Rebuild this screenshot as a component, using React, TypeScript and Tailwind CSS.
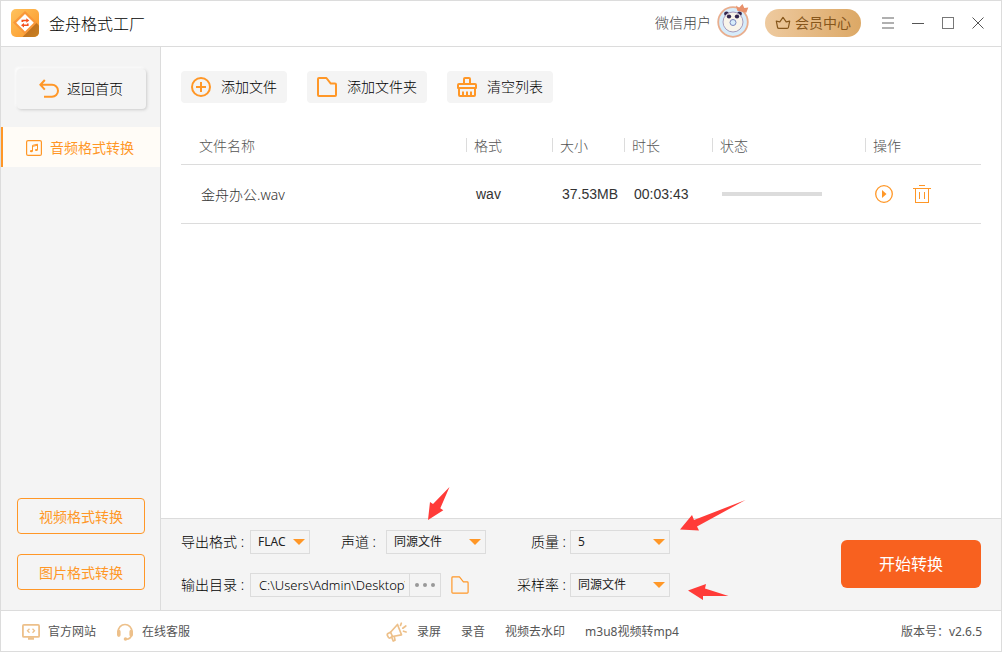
import { useState } from "react"
import type { ReactNode } from "react"

const LINE = "border-[#dcdcdc]"

function LogoIcon() {
    return (
        <svg width="28" height="28" viewBox="0 0 28 28" aria-hidden="true">
            <defs>
                <linearGradient id="logoBg" x1="0" y1="0" x2="1" y2="1">
                    <stop offset="0" stopColor="#ffc35e" />
                    <stop offset="1" stopColor="#fb9526" />
                </linearGradient>
                <linearGradient id="logoShade" x1="0" y1="0" x2="1" y2="1">
                    <stop offset="0" stopColor="#b9651a" />
                    <stop offset="1" stopColor="#c98223" />
                </linearGradient>
            </defs>
            <rect width="28" height="28" rx="5" fill="url(#logoBg)" />
            <path d="M25 13.5L28 16.5V23a5 5 0 0 1-5 5H11.5Z" fill="url(#logoShade)" />
            <path d="M14 2L26 13.5L14 25.5L2 13.5Z" fill="#f9983a" />
            <path d="M14 5L22.8 13.8L14 22.6L5.2 13.8Z" fill="#fff" />
            <path d="M10.5 13v-2.300h4.800V9.200l3 2.300-3 2.300v-1.500h-3V13ZM17.600 14.400v2.600h-4.600v1.500l-3-2.300 3-2.300v1.500h3v-1Z" fill="#f4501e" />
        </svg>
    )
}

function AvatarIcon() {
    return (
        <svg width="34" height="34" viewBox="0 0 34 34" aria-hidden="true">
            <circle cx="16" cy="18" r="14.8" fill="#d6ecfb" stroke="#e9ae8e" strokeWidth="1.8" />
            <circle cx="9.5" cy="9.8" r="2.4" fill="#32264e" />
            <circle cx="22.5" cy="9.8" r="2.4" fill="#32264e" />
            <circle cx="16" cy="18" r="10" fill="#f8f4ea" stroke="#a79bbb" strokeWidth="1" />
            <ellipse cx="12" cy="12.500" rx="2.200" ry="2" fill="#32264e" />
            <ellipse cx="20" cy="12.500" rx="2.200" ry="2" fill="#32264e" />
            <circle cx="16" cy="18.500" r="3" fill="#d6ecfb" stroke="#7b86bd" strokeWidth="1" />
            <path d="M19 1.500l3 2.200L25.500 0l1.800 4 4-.5-2 5.200-9-2Z" fill="#e8916c" />
        </svg>
    )
}

function CrownIcon() {
    return (
        <svg width="16" height="16" viewBox="0 0 16 16" fill="none" stroke="#86561b" strokeWidth="1.2" strokeLinejoin="round" aria-hidden="true">
            <path d="M3.800 13.400Q2.800 13.400 2.600 12.500L1.300 6.200L4.800 6.800L8 2.400L11.200 6.800L14.700 6.200L13.400 12.500Q13.200 13.400 12.200 13.400Z" />
        </svg>
    )
}

function BackIcon() {
    return (
        <svg width="20" height="20" viewBox="0 0 20 20" fill="none" stroke="#ff9727" strokeWidth="2" aria-hidden="true">
            <path d="M5.800 1L1.400 5.800L5.800 10.600M1.600 5.800H13a6 6 0 0 1 0 12H5" />
        </svg>
    )
}

function MusicIcon() {
    return (
        <svg width="16" height="16" viewBox="0 0 16 16" fill="none" stroke="#ff9727" strokeWidth="1.2" aria-hidden="true">
            <rect x=".6" y=".6" width="14.8" height="14.8" rx="1.5" />
            <path d="M6.500 11V5.400L11.500 4.200v5.600M6.500 6.400l5-1.200" strokeWidth="1" />
            <ellipse cx="5.400" cy="11.200" rx="1.500" ry="1.100" fill="#ff9727" stroke="none" />
            <ellipse cx="10.400" cy="10" rx="1.500" ry="1.100" fill="#ff9727" stroke="none" />
        </svg>
    )
}

function AddIcon() {
    return (
        <svg width="20" height="20" viewBox="0 0 20 20" fill="none" stroke="#ff9727" strokeWidth="2" aria-hidden="true">
            <circle cx="10" cy="10" r="9" />
            <path d="M10 5v10M5 10h10" />
        </svg>
    )
}

function FolderIcon({ size, stroke }: { size: number; stroke: number }) {
    return (
        <svg width={size} height={size} viewBox="0 0 20 20" fill="none" stroke="#ff9727" strokeWidth={stroke} strokeLinejoin="round" aria-hidden="true">
            <path d="M1 2a1 1 0 0 1 1-1h7.4l4.4 5.6H18a1 1 0 0 1 1 1V18a1 1 0 0 1-1 1H2a1 1 0 0 1-1-1Z" />
        </svg>
    )
}

function BrushIcon() {
    return (
        <svg width="20" height="20" viewBox="0 0 20 20" fill="none" stroke="#ff9727" strokeWidth="2" strokeLinejoin="round" aria-hidden="true">
            <path d="M7 7V2a1 1 0 0 1 1-1h4a1 1 0 0 1 1 1v5" />
            <path d="M1 11V8a1 1 0 0 1 1-1h16a1 1 0 0 1 1 1V11ZM2 11v7a1 1 0 0 0 1 1h14a1 1 0 0 0 1-1v-7" />
            <path d="M6 18.500v-4M10 18.500v-4M14 18.500v-4" />
        </svg>
    )
}

function PlayIcon() {
    return (
        <svg width="18" height="18" viewBox="0 0 18 18" fill="none" aria-hidden="true">
            <circle cx="9" cy="9" r="8.300" stroke="#ff9727" strokeWidth="1.300" />
            <path d="M7 5v8l4.500-4Z" fill="#ff9727" />
        </svg>
    )
}

function TrashIcon() {
    return (
        <svg width="18" height="18" viewBox="0 0 18 18" fill="none" stroke="#ff9727" shapeRendering="crispEdges" aria-hidden="true">
            <path d="M6 .5h6M0 3.500h18M2.500 3.500v14h13v-14M6.500 7v7M11.500 7v7" />
        </svg>
    )
}

function MonitorIcon() {
    return (
        <svg width="18" height="16" viewBox="0 0 18 16" fill="none" stroke="#edc08a" strokeWidth="1.800" aria-hidden="true">
            <rect x=".9" y=".9" width="16.200" height="12" rx="1" />
            <path d="M7.500 4.800L5.500 6.800L7.500 8.800M10.500 4.800L12.500 6.800L10.500 8.800" strokeWidth="1.300" />
            <path d="M6 14.500h6" strokeWidth="2.500" />
        </svg>
    )
}

function HeadsetIcon() {
    return (
        <svg width="18" height="18" viewBox="0 0 18 18" fill="none" stroke="#edc08a" strokeWidth="1.500" aria-hidden="true">
            <path d="M2 9a7 7.600 0 0 1 14 0M15.500 12c-.5 2.500-2.500 4-5 4.300" />
            <path d="M2.800 8.500v3.600M15.200 8.500v3.600" strokeWidth="3.600" strokeLinecap="round" />
            <circle cx="9.500" cy="16" r="1.800" fill="#edc08a" stroke="none" />
        </svg>
    )
}

function MegaphoneIcon() {
    return (
        <svg width="21" height="20" viewBox="0 0 21 20" fill="none" stroke="#edc08a" strokeWidth="1.700" strokeLinejoin="round" strokeLinecap="round" aria-hidden="true">
            <path d="M11.500 2.500L15.500 12.800L6.500 14.500L4.500 10.200Z" />
            <path d="M4.500 10.200L2 11.500Q.9 12.200 1.400 13.400L2.300 15.200Q3 16.500 4.300 15.800L6.500 14.500M6 16l1.200 3 1.800-.8-.6-3M14.500 3.500L15.300 1.200M16.800 6.200L19.800 4M17.500 9.200l2.600.8" />
        </svg>
    )
}

function Dropdown({ id, options, className }: { id: string; options: string[]; className: string }) {
    const [value, setValue] = useState(options[0])

    return (
        <div className={`relative h-6 ${className}`}>
            <select
                id={id}
                value={value}
                onChange={(e) => setValue(e.target.value)}
                className={`block size-full appearance-none border ${LINE} bg-transparent pl-[7px] pr-5 text-xs font-normal text-[#222] outline-none`}
            >
                {options.map((option) => <option key={option}>{option}</option>)}
            </select>
            <svg className="pointer-events-none absolute right-[5px] top-[9px]" width="12" height="6" viewBox="0 0 12 6" aria-hidden="true">
                <path d="M0 0h12L6 6Z" fill="#ff9727" />
            </svg>
        </div>
    )
}

function ToolButton({ icon, children }: { icon: ReactNode; children: ReactNode }) {
    return (
        <button type="button" className="flex h-8 items-center gap-2.5 rounded bg-[#f4f4f4] px-2.5 text-sm text-black">
            {icon}
            {children}
        </button>
    )
}

function HeadCell({ children }: { children: string }) {
    return (
        <th scope="col" className="p-0 font-light">
            <span className={`block h-[14px] border-l ${LINE} pl-[7px] leading-4`}>{children}</span>
        </th>
    )
}

function TitleBar() {
    return (
        <header className={`flex h-[46px] shrink-0 items-center border-b ${LINE} bg-white pb-px pl-2.5 pr-2`}>
            <LogoIcon />
            <h1 className="ml-2.5 pt-0.5 text-base text-black">金舟格式工厂</h1>
            <span className="ml-auto text-sm text-[#444]">微信用户</span>
            <span className="ml-1.5 mr-3.5 pb-1"><AvatarIcon /></span>
            <button type="button" className="flex h-7 items-center gap-1 rounded-full bg-linear-to-r from-[#eeca9f] to-[#dca865] px-2.5 text-sm font-normal text-[#86561b]">
                <CrownIcon />
                会员中心
            </button>
            <div className="ml-3 flex">
                <button type="button" aria-label="菜单" className="flex size-[30px] items-center justify-center">
                    <svg width="12" height="12" viewBox="0 0 12 12" stroke="#b0b0b0" strokeWidth="2" shapeRendering="crispEdges"><path d="M0 1h12M0 6h12M0 11h12" /></svg>
                </button>
                <button type="button" aria-label="最小化" className="flex size-[30px] items-center justify-center">
                    <svg width="12" height="12" viewBox="0 0 12 12" stroke="#555" shapeRendering="crispEdges"><path d="M0 6.500h12" /></svg>
                </button>
                <button type="button" aria-label="最大化" className="flex size-[30px] items-center justify-center">
                    <svg width="12" height="12" viewBox="0 0 12 12" fill="none" stroke="#777" shapeRendering="crispEdges"><path d="M.5 .5h11v11H.5Z" /></svg>
                </button>
                <button type="button" aria-label="关闭" className="flex size-[30px] items-center justify-center">
                    <svg width="12" height="12" viewBox="0 0 12 12" stroke="#555"><path d="M.5 .5l11 11M11.500 .5l-11 11" /></svg>
                </button>
            </div>
        </header>
    )
}

function Sidebar() {
    return (
        <aside className={`flex w-40 shrink-0 flex-col border-r ${LINE} bg-[#f4f4f4] pb-5 pt-[22px]`}>
            <button type="button" className="mx-4 mr-3.5 flex h-10 items-center gap-2 rounded bg-[#f4f4f4] pl-[22px] text-sm text-black shadow-[1px_1px_3px_#ccc,-2px_-2px_2px_#fcfcfc]">
                <BackIcon />
                返回首页
            </button>
            <a href="#audio" className="mt-[18px] flex h-10 items-center gap-2 border-l-2 border-[#ff9727] bg-[#fffcf7] pl-[23px] pt-px text-sm font-normal text-[#ff9727]">
                <MusicIcon />
                音频格式转换
            </a>
            <div className="mt-auto flex flex-col gap-5 pl-4 pr-[15px]">
                <button type="button" className="h-9 rounded border border-[#ff9727] pt-0.5 text-sm font-normal text-[#ff9727]">视频格式转换</button>
                <button type="button" className="h-9 rounded border border-[#ff9727] pt-0.5 text-sm font-normal text-[#ff9727]">图片格式转换</button>
            </div>
        </aside>
    )
}

function FileTable() {
    return (
        <table className="mt-6 w-full table-fixed border-collapse text-left text-sm">
            <colgroup>
                <col />
                <col className="w-[86px]" />
                <col className="w-[72px]" />
                <col className="w-[88px]" />
                <col className="w-[153px]" />
                <col className="w-[116px]" />
            </colgroup>
            <thead>
                <tr className={`h-[37px] border-b ${LINE} text-[#555]`}>
                    <th scope="col" className="p-0 pl-[18px] pt-0.5 font-light">文件名称</th>
                    <HeadCell>格式</HeadCell>
                    <HeadCell>大小</HeadCell>
                    <HeadCell>时长</HeadCell>
                    <HeadCell>状态</HeadCell>
                    <HeadCell>操作</HeadCell>
                </tr>
            </thead>
            <tbody>
                <tr className={`h-[59px] border-b ${LINE} text-[#333]`}>
                    <td className="p-0 pl-5 pt-0.5">金舟办公.wav</td>
                    <td className="p-0 pl-2.5 font-['Liberation_Sans',sans-serif]">wav</td>
                    <td className="whitespace-nowrap p-0 pl-2.5 font-['Liberation_Sans',sans-serif]">37.53MB</td>
                    <td className="p-0 pl-2.5 font-['Liberation_Sans',sans-serif]">00:03:43</td>
                    <td className="p-0 pl-2.5">
                        <div role="progressbar" aria-label="状态" aria-valuenow={0} className="h-1 w-[100px] bg-[#dcdcdc]" />
                    </td>
                    <td className="p-0 pl-2.5">
                        <div className="flex items-center gap-5">
                            <button type="button" aria-label="播放"><PlayIcon /></button>
                            <button type="button" aria-label="删除"><TrashIcon /></button>
                        </div>
                    </td>
                </tr>
            </tbody>
        </table>
    )
}

function OutputSettings() {
    return (
        <section className={`relative grid grid-cols-[305px_184px_1fr] gap-y-[19px] border-t ${LINE} bg-[#f4f4f4] px-5 pb-[13px] pt-[11px] text-sm text-black`}>
            <div className="flex items-center justify-between">
                <div className="flex items-center">
                    <label htmlFor="format" className="w-[69px]">导出格式 :</label>
                    <Dropdown id="format" options={["FLAC", "MP3", "WAV"]} className="w-[60px]" />
                </div>
                <div className="flex items-center gap-2.5">
                    <label htmlFor="channel">声道 :</label>
                    <Dropdown id="channel" options={["同源文件", "单声道", "立体声"]} className="w-[100px]" />
                </div>
            </div>
            <div className="flex items-center justify-end gap-1">
                <label htmlFor="quality">质量 :</label>
                <Dropdown id="quality" options={["5", "6", "7"]} className="w-[100px]" />
            </div>
            <button type="button" className="col-start-3 row-span-2 row-start-1 h-12 w-[140px] self-center justify-self-end rounded-md bg-[#f8611f] text-base font-normal text-white">
                开始转换
            </button>
            <div className="flex items-center">
                <label htmlFor="folder" className="w-[69px]">输出目录 :</label>
                <input id="folder" defaultValue="C:\Users\Admin\Desktop\" className={`h-6 w-40 border ${LINE} bg-transparent pl-2 pr-1 text-[13px] text-black outline-none`} />
                <button type="button" aria-label="浏览" className={`flex h-6 w-[31px] items-center justify-center border border-l-0 ${LINE}`}>
                    <svg width="20" height="4" viewBox="0 0 20 4" fill="#999"><circle cx="2" cy="2" r="2" /><circle cx="10" cy="2" r="2" /><circle cx="18" cy="2" r="2" /></svg>
                </button>
                <button type="button" aria-label="打开文件夹" className="ml-2.5"><FolderIcon size={18} stroke={1.3} /></button>
            </div>
            <div className="flex items-center justify-end gap-1">
                <label htmlFor="rate">采样率 :</label>
                <Dropdown id="rate" options={["同源文件", "44100", "48000"]} className="w-[100px]" />
            </div>

            {/* Hint arrows */}
            <svg className="pointer-events-none absolute -top-8 left-[267px]" width="22" height="34" viewBox="0 0 22 34" fill="#ff3b38" aria-hidden="true">
                <path d="M21.500 0L12.300 21.300L15.300 23.300L0 33L2 15L5 17Z" />
            </svg>
            <svg className="pointer-events-none absolute -top-[19px] left-[519px]" width="66" height="31" viewBox="0 0 66 31" fill="#ff3b38" aria-hidden="true">
                <path d="M65.500 0L17 26.500L19 30.500L0 29.500L12 15L14 20Z" />
            </svg>
            <svg className="pointer-events-none absolute left-[527px] top-[65px]" width="41" height="17" viewBox="0 0 41 17" fill="#ff3b38" aria-hidden="true">
                <path d="M40.500 12L15 12V16L0 6.500L18 0L17 4.500Z" />
            </svg>
        </section>
    )
}

function Footer() {
    return (
        <footer className={`grid h-[41px] shrink-0 grid-cols-[364px_1fr_auto] items-center border-t ${LINE} bg-white pl-[21px] pr-[19px] pt-px text-xs font-normal text-[#555]`}>
            <div className="flex items-center gap-5">
                <a href="#site" className="flex items-center gap-2"><MonitorIcon />官方网站</a>
                <a href="#service" className="flex items-center gap-2"><HeadsetIcon />在线客服</a>
            </div>
            <nav className="flex items-center gap-5">
                <a href="#screen" className="flex items-center gap-2.5"><MegaphoneIcon />录屏</a>
                <a href="#record">录音</a>
                <a href="#watermark">视频去水印</a>
                <a href="#m3u8">m3u8视频转mp4</a>
            </nav>
            <span>版本号：v2.6.5</span>
        </footer>
    )
}

export default function App() {
    return (
        <div className={`flex min-h-screen flex-col border ${LINE} bg-white font-['Noto_Sans','Noto_Sans_CJK_SC',sans-serif] font-light`}>
            <TitleBar />
            <div className="flex grow">
                <Sidebar />
                <main className="flex min-w-0 grow flex-col">
                    <div className="grow px-5 pt-6">
                        <div className="flex gap-5">
                            <ToolButton icon={<AddIcon />}>添加文件</ToolButton>
                            <ToolButton icon={<FolderIcon size={20} stroke={2} />}>添加文件夹</ToolButton>
                            <ToolButton icon={<BrushIcon />}>清空列表</ToolButton>
                        </div>
                        <FileTable />
                    </div>
                    <OutputSettings />
                </main>
            </div>
            <Footer />
        </div>
    )
}
